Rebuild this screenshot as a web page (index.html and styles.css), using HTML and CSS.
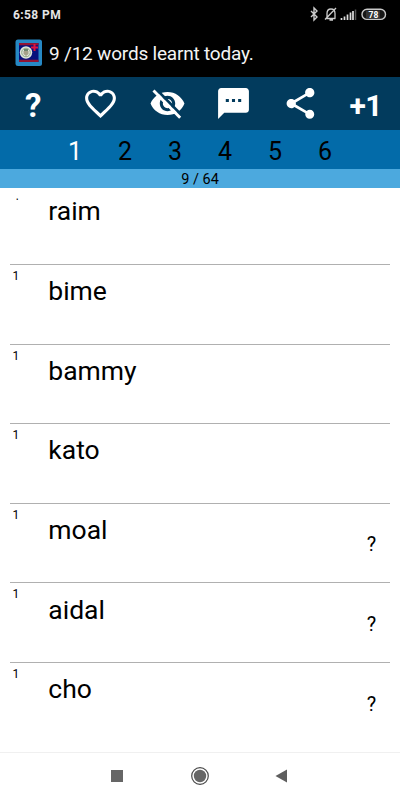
FILE: index.html
```html
<!DOCTYPE html>
<html lang="en">
<head>
<meta charset="utf-8">
<title>Words</title>
<link rel="stylesheet" href="styles.css">
</head>
<body>
<div class="status">
  <span class="clock">6:58 PM</span>
  <svg class="status-icons" width="80" height="16" viewBox="0 0 80 16">
    <path d="M2 5l6 6-3 3V2l3 3-6 6" fill="none" stroke="#ccc" stroke-width="1.4"/>
    <path d="M16.500 12.500h10M18 12.500V7.500q0-4.500 4-4.500t4 4.500V12.500M20.500 14h3.500M16 13.500L27 2" fill="none" stroke="#ccc" stroke-width="1.300"/>
    <path d="M32.500 14v-2M35.500 14v-3.500M38.500 14V8.500M41.500 14V6.500M44 14V5" stroke="#ddd" stroke-width="1.700"/>
    <path d="M46.500 14V3.500" stroke="#555" stroke-width="1.500"/>
    <rect x="53" y="3.200" width="23.500" height="10.200" rx="5" fill="#161616" stroke="#c8c8c8" stroke-width="1.400"/>
    <rect x="57" y="4.500" width="14" height="7.600" fill="#333"/>
    <text x="64.500" y="11.500" class="battery" text-anchor="middle">78</text>
  </svg>
</div>
<header class="title">
  <svg class="flag" width="28" height="28" viewBox="0 0 28 28">
    <rect x="0.500" y="0.500" width="26.500" height="26.500" rx="2.500" fill="#2688c4"/>
    <rect x="4" y="4" width="19.500" height="19" fill="#07107c"/>
    <path d="M4 4h19.500v2.300H4zM4 20.800h19.500V23H4z" fill="#911434"/>
    <path d="M19.500 5v7M16 8.500h7" stroke="#e01440" stroke-width="2"/>
    <circle cx="11" cy="13.500" r="6.200" fill="#e2e6dc"/>
    <circle cx="11" cy="13.500" r="4.300" fill="none" stroke="#8ba582"/>
    <path d="M8.500 12h5v3l-2.500 2-2.500-2z" fill="#a6a289"/>
    <path d="M9 11h4" stroke="#49664b" stroke-width="1.500"/>
  </svg>
  <span>9 /12 words learnt today.</span>
</header>
<nav class="tools">
  <span class="tool help">?</span>
  <span class="tool"><svg viewBox="0 0 24 24"><path d="M16.500 3c-1.740 0-3.410.81-4.500 2.090C10.910 3.810 9.240 3 7.500 3 4.420 3 2 5.420 2 8.500c0 3.780 3.400 6.860 8.550 11.540L12 21.350l1.450-1.320C18.600 15.360 22 12.280 22 8.500 22 5.420 19.580 3 16.500 3zm-4.400 15.550l-.1.100-.1-.1C7.140 14.240 4 11.390 4 8.500 4 6.500 5.500 5 7.500 5c1.540 0 3.040.99 3.570 2.360h1.870C13.460 5.990 14.960 5 16.500 5c2 0 3.500 1.500 3.500 3.500 0 2.890-3.140 5.740-7.900 10.050z"/></svg></span>
  <span class="tool"><svg viewBox="0 0 24 24"><path d="M12 4.500C7 4.500 2.730 7.610 1 12c1.730 4.390 6 7.500 11 7.500s9.270-3.110 11-7.500c-1.730-4.390-6-7.500-11-7.500zM12 17c-2.760 0-5-2.240-5-5s2.240-5 5-5 5 2.240 5 5-2.240 5-5 5zm0-8c-1.660 0-3 1.340-3 3s1.340 3 3 3 3-1.340 3-3-1.340-3-3-3z"/><path class="gap" d="M4.200 2.300L21.500 20"/><path class="slash" d="M2.900 3.600L20.200 21.300"/></svg></span>
  <span class="tool"><svg viewBox="0 0 24 24"><path d="M20 2H4c-1.100 0-1.990.9-1.990 2L2 22l4-4h14c1.100 0 2-.9 2-2V4c0-1.100-.9-2-2-2zM9 11H7V9h2v2zm4 0h-2V9h2v2zm4 0h-2V9h2v2z"/></svg></span>
  <span class="tool"><svg viewBox="0 0 24 24"><path d="M18 16.080c-.76 0-1.440.3-1.960.77L8.910 12.700c.05-.23.09-.46.09-.7s-.04-.47-.09-.7l7.050-4.110c.54.5 1.250.81 2.040.81 1.660 0 3-1.340 3-3s-1.340-3-3-3-3 1.340-3 3c0 .24.04.47.09.7L8.040 9.810C7.500 9.310 6.790 9 6 9c-1.660 0-3 1.340-3 3s1.340 3 3 3c.79 0 1.500-.31 2.040-.81l7.120 4.160c-.05.21-.08.43-.08.65 0 1.610 1.310 2.920 2.920 2.920 1.610 0 2.920-1.310 2.920-2.920s-1.310-2.920-2.920-2.920z"/></svg></span>
  <span class="tool plus">+1</span>
</nav>
<nav class="tabs">
  <span class="active">1</span><span>2</span><span>3</span><span>4</span><span>5</span><span>6</span>
</nav>
<div class="progress">9 / 64</div>
<main class="list">
  <div class="row first"><span class="level">1</span><span class="word">raim</span></div>
  <div class="row"><span class="level">1</span><span class="word">bime</span></div>
  <div class="row"><span class="level">1</span><span class="word">bammy</span></div>
  <div class="row"><span class="level">1</span><span class="word">kato</span></div>
  <div class="row"><span class="level">1</span><span class="word">moal</span><span class="hint">?</span></div>
  <div class="row"><span class="level">1</span><span class="word">aidal</span><span class="hint">?</span></div>
  <div class="row"><span class="level">1</span><span class="word">cho</span><span class="hint">?</span></div>
</main>
<footer class="system">
  <svg width="400" height="47" viewBox="0 0 400 47">
    <path d="M111 17h12v12h-12z" fill="#666"/>
    <circle cx="200" cy="23" r="8.300" fill="none" stroke="#4a4a4a" stroke-width="1.200"/>
    <circle cx="200" cy="23" r="6.200" fill="#666"/>
    <path d="M287 16.500v13l-11.500-6.500z" fill="#5e5e5e"/>
  </svg>
</footer>
</body>
</html>
```
FILE: styles.css
```css
* { box-sizing: border-box; }
body {
  margin: 0;
  width: 400px;
  height: 800px;
  display: flex;
  flex-direction: column;
  overflow: hidden;
  background: #fff;
  color: #000;
  font-family: Roboto, "Liberation Sans", sans-serif;
}
svg { display: block; flex: none; }
.status {
  height: 28px;
  padding: 1px 11px 0 13px;
  display: flex;
  align-items: center;
  justify-content: space-between;
  background: #000;
  color: #e4e4e4;
}
.status-icons { margin-top: -1px; }
.clock { font-size: 12px; font-weight: 700; letter-spacing: 0.4px; }
.battery { font-size: 8.500px; font-weight: 700; fill: #fff; }
.title {
  height: 49px;
  padding: 0 15px 0 15px;
  display: flex;
  align-items: center;
  gap: 6px;
  background: #000;
  color: #f4f4f4;
  font-size: 19px;
  letter-spacing: -0.200px;
  white-space: nowrap;
}
.flag { margin-top: 1px; }
.title span { padding-top: 2px; }
.tools {
  height: 53px;
  display: grid;
  grid-template-columns: repeat(6, 1fr);
  background: #023b5d;
  color: #fff;
}
.tool { display: flex; align-items: center; justify-content: center; padding-left: 1px; }
.tool svg { width: 37px; height: 37px; fill: #fff; }
.help { padding-top: 3px; padding-left: 0; font-size: 33px; font-weight: 700; }
.plus { padding: 3px 2px 0 0; font-size: 30px; font-weight: 700; letter-spacing: -0.500px; }
.gap { stroke: #023b5d; stroke-width: 1.800; }
.slash { stroke: #fff; stroke-width: 1.900; }
.tabs {
  height: 39px;
  padding: 3px 50px 0;
  display: grid;
  grid-template-columns: repeat(6, 1fr);
  align-items: center;
  text-align: center;
  background: #036ba9;
  font-size: 25px;
}
.active { color: #fff; }
.progress {
  height: 18.500px;
  flex: none;
  background: #4ca9de;
  font-size: 14.500px;
  line-height: 22px;
  text-align: center;
}
.list { flex: 1; padding: 0 10.400px; }
.row {
  height: 79.600px;
  display: flex;
  align-items: flex-start;
  border-bottom: 1px solid #b0b0b0;
}
.first { height: 77.450px; }
.row:last-child { border-bottom: 0; }
.level { width: 37.900px; padding: 4px 0 0 2px; font-size: 12px; line-height: 14px; }
.word { padding-top: 10.200px; font-size: 26.500px; line-height: 31px; }
.hint { margin: 28.600px 13.500px 0 auto; font-size: 20px; line-height: 24px; }
.first .level { padding: 1px 0 0 3px; clip-path: inset(11px 0 0 0); }
.first .word { padding-top: 7.800px; }
.system { height: 48px; border-top: 1px solid #f0f0f0; }
```
